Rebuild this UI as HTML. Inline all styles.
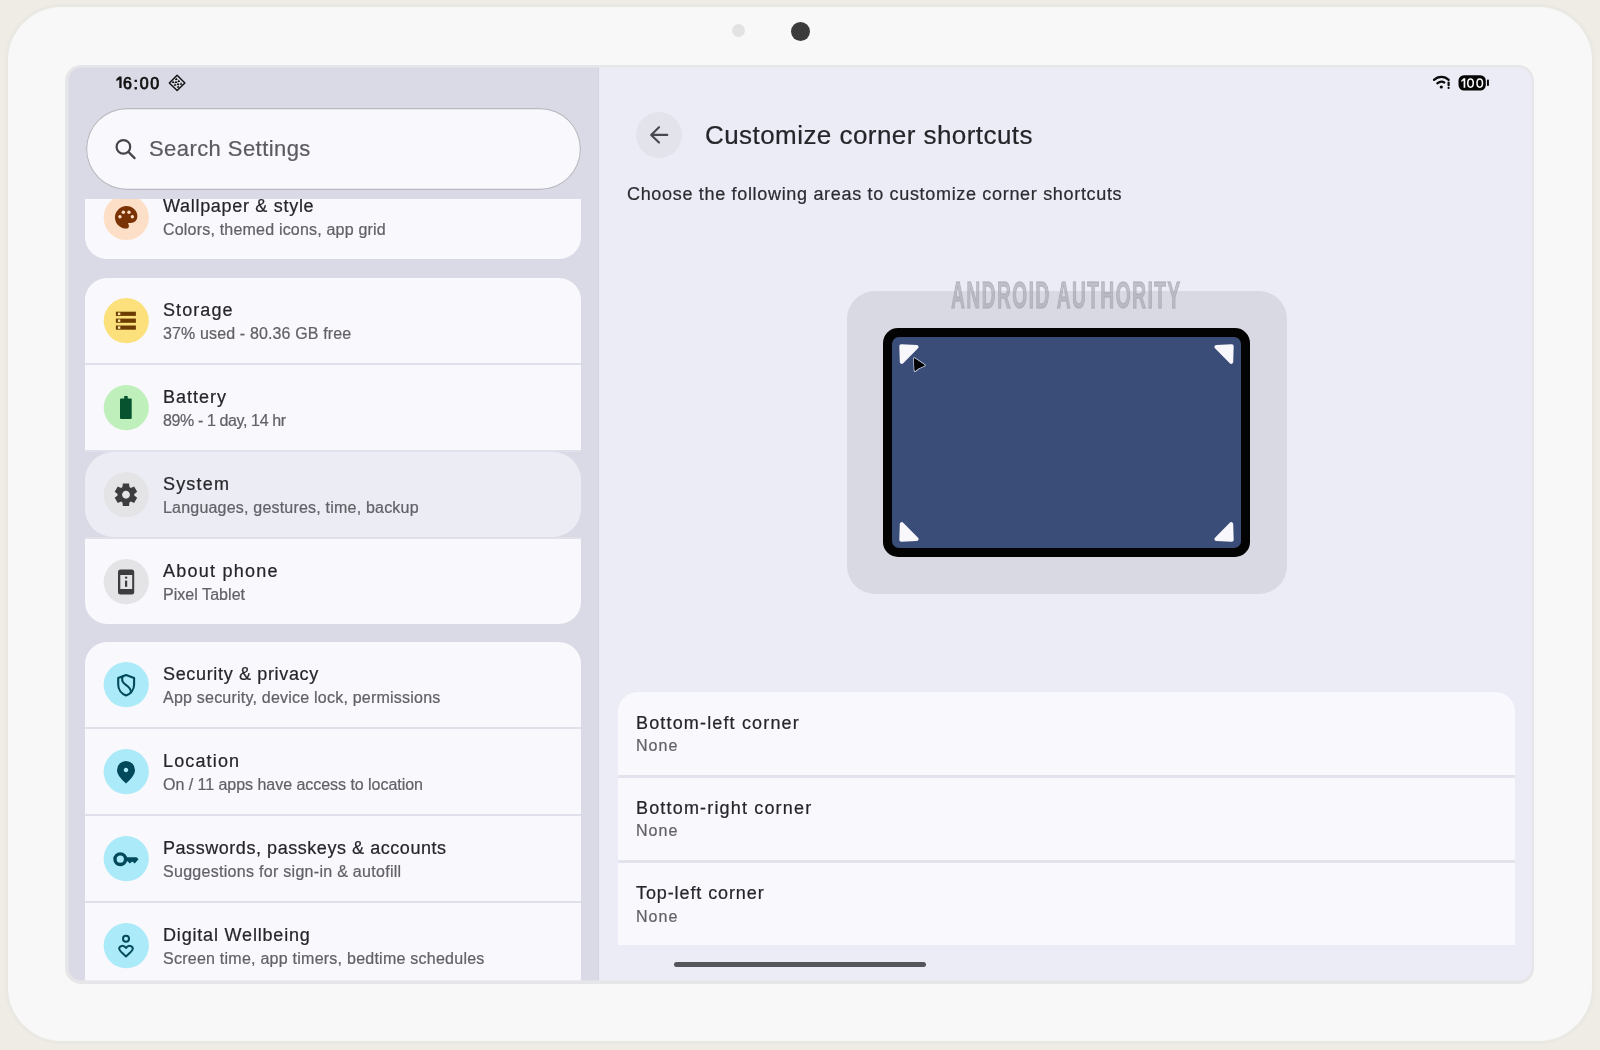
<!DOCTYPE html>
<html><head><meta charset="utf-8">
<style>
*{margin:0;padding:0;box-sizing:border-box}
html,body{width:1600px;height:1050px;overflow:hidden;background:#eeece5;font-family:"Liberation Sans",sans-serif}
.a{position:absolute}
.t{position:absolute;white-space:nowrap;line-height:1;will-change:transform}
#scr{position:absolute;left:0;top:0;width:1600px;height:1050px;clip-path:inset(67.5px 68.5px 69.5px 68.5px round 13px)}
svg{position:absolute;left:0;top:0}
</style></head>
<body>
<div class="a" style="left:4.6px;top:4.2px;width:1590.6000000000001px;height:1040.0px;background:#f8f8f8;border-radius:57px;border:3.5px solid #eae8e2;"></div>
<div class="a" style="left:731.5px;top:24px;width:13.0px;height:13px;background:#e3e3e3;border-radius:50%;"></div>
<div class="a" style="left:790.5px;top:21.5px;width:19.0px;height:19.0px;background:#3b3b3b;border-radius:50%;"></div>
<div class="a" style="left:65.2px;top:64.5px;width:1469.0px;height:919.1px;background:#e6e6e9;border-radius:16px;"></div>
<div id="scr">
<div class="a" style="left:60px;top:60px;width:1480px;height:930px;background:#ececf6;border-radius:0;"></div>
<div class="a" style="left:60px;top:60px;width:539px;height:930px;background:#dadae6;border-radius:0;"></div>
<div class="a" style="left:597.6px;top:60px;width:1.3999999999999773px;height:930px;background:#d3d3de;border-radius:0;"></div>
<div class="t" style="left:123.00px;top:75.66px;font-size:16px;color:#111;letter-spacing:1.700px;font-weight:normal;-webkit-text-stroke:0.75px #111;">6:00</div>
<div class="a" style="left:85.5px;top:108px;width:495.0px;height:81.5px;background:#f9f8fc;border-radius:41px;box-shadow:inset 0 0 0 1.2px #b9b9c2;"></div>
<div class="t" style="left:149.00px;top:138.18px;font-size:22px;color:#5b5b62;letter-spacing:0.430px;font-weight:normal;-webkit-text-stroke:0.22px #5b5b62;">Search Settings</div>
<div class="a" style="left:85px;top:363px;width:496px;height:2px;background:#e0e0ea;border-radius:0;"></div>
<div class="a" style="left:85px;top:450px;width:496px;height:2px;background:#e0e0ea;border-radius:0;"></div>
<div class="a" style="left:85px;top:537px;width:496px;height:2px;background:#e0e0ea;border-radius:0;"></div>
<div class="a" style="left:85px;top:727px;width:496px;height:2px;background:#e0e0ea;border-radius:0;"></div>
<div class="a" style="left:85px;top:814px;width:496px;height:2px;background:#e0e0ea;border-radius:0;"></div>
<div class="a" style="left:85px;top:901px;width:496px;height:2px;background:#e0e0ea;border-radius:0;"></div>
<div class="a" style="left:85px;top:199px;width:496px;height:60px;overflow:hidden;border-radius:0 0 22px 22px;background:#f9f8fc"><div style="position:absolute;left:-85px;top:-199px;width:1600px;height:1050px"><div class="t" style="left:162.50px;top:196.56px;font-size:18px;color:#25252a;letter-spacing:0.700px;font-weight:normal;-webkit-text-stroke:0.22px #25252a;">Wallpaper &amp; style</div>
<div class="t" style="left:162.50px;top:222.26px;font-size:16px;color:#616168;letter-spacing:0.197px;font-weight:normal;-webkit-text-stroke:0.22px #616168;">Colors, themed icons, app grid</div>
</div></div>
<div class="a" style="left:85px;top:278px;width:496px;height:85px;background:#f9f8fc;border-radius:22px 22px 0 0;"></div>
<div class="t" style="left:162.50px;top:300.56px;font-size:18px;color:#25252a;letter-spacing:1.083px;font-weight:normal;-webkit-text-stroke:0.22px #25252a;">Storage</div>
<div class="t" style="left:162.50px;top:326.26px;font-size:16px;color:#616168;letter-spacing:0.139px;font-weight:normal;-webkit-text-stroke:0.22px #616168;">37% used - 80.36 GB free</div>
<div class="a" style="left:85px;top:365px;width:496px;height:85px;background:#f9f8fc;border-radius:0;"></div>
<div class="t" style="left:162.50px;top:387.56px;font-size:18px;color:#25252a;letter-spacing:0.983px;font-weight:normal;-webkit-text-stroke:0.22px #25252a;">Battery</div>
<div class="t" style="left:162.50px;top:413.26px;font-size:16px;color:#616168;letter-spacing:-0.382px;font-weight:normal;-webkit-text-stroke:0.22px #616168;">89% - 1 day, 14 hr</div>
<div class="a" style="left:85px;top:452px;width:496px;height:85px;background:#ececf4;border-radius:28px;"></div>
<div class="t" style="left:162.50px;top:474.56px;font-size:18px;color:#25252a;letter-spacing:1.180px;font-weight:normal;-webkit-text-stroke:0.22px #25252a;">System</div>
<div class="t" style="left:162.50px;top:500.26px;font-size:16px;color:#616168;letter-spacing:0.203px;font-weight:normal;-webkit-text-stroke:0.22px #616168;">Languages, gestures, time, backup</div>
<div class="a" style="left:85px;top:539px;width:496px;height:85px;background:#f9f8fc;border-radius:0 0 22px 22px;"></div>
<div class="t" style="left:162.50px;top:561.56px;font-size:18px;color:#25252a;letter-spacing:1.240px;font-weight:normal;-webkit-text-stroke:0.22px #25252a;">About phone</div>
<div class="t" style="left:162.50px;top:587.26px;font-size:16px;color:#616168;letter-spacing:0.045px;font-weight:normal;-webkit-text-stroke:0.22px #616168;">Pixel Tablet</div>
<div class="a" style="left:85px;top:642px;width:496px;height:85px;background:#f9f8fc;border-radius:22px 22px 0 0;"></div>
<div class="t" style="left:162.50px;top:664.56px;font-size:18px;color:#25252a;letter-spacing:0.660px;font-weight:normal;-webkit-text-stroke:0.22px #25252a;">Security &amp; privacy</div>
<div class="t" style="left:162.50px;top:690.26px;font-size:16px;color:#616168;letter-spacing:0.220px;font-weight:normal;-webkit-text-stroke:0.22px #616168;">App security, device lock, permissions</div>
<div class="a" style="left:85px;top:729px;width:496px;height:85px;background:#f9f8fc;border-radius:0;"></div>
<div class="t" style="left:162.50px;top:751.56px;font-size:18px;color:#25252a;letter-spacing:1.143px;font-weight:normal;-webkit-text-stroke:0.22px #25252a;">Location</div>
<div class="t" style="left:162.50px;top:777.26px;font-size:16px;color:#616168;letter-spacing:-0.034px;font-weight:normal;-webkit-text-stroke:0.22px #616168;">On / 11 apps have access to location</div>
<div class="a" style="left:85px;top:816px;width:496px;height:85px;background:#f9f8fc;border-radius:0;"></div>
<div class="t" style="left:162.50px;top:838.56px;font-size:18px;color:#25252a;letter-spacing:0.550px;font-weight:normal;-webkit-text-stroke:0.22px #25252a;">Passwords, passkeys &amp; accounts</div>
<div class="t" style="left:162.50px;top:864.26px;font-size:16px;color:#616168;letter-spacing:0.290px;font-weight:normal;-webkit-text-stroke:0.22px #616168;">Suggestions for sign-in &amp; autofill</div>
<div class="a" style="left:85px;top:903px;width:496px;height:85px;background:#f9f8fc;border-radius:0;"></div>
<div class="t" style="left:162.50px;top:925.56px;font-size:18px;color:#25252a;letter-spacing:0.819px;font-weight:normal;-webkit-text-stroke:0.22px #25252a;">Digital Wellbeing</div>
<div class="t" style="left:162.50px;top:951.26px;font-size:16px;color:#616168;letter-spacing:0.246px;font-weight:normal;-webkit-text-stroke:0.22px #616168;">Screen time, app timers, bedtime schedules</div>
<div class="a" style="left:635.7px;top:111.7px;width:46.0px;height:45.999999999999986px;background:#e3e3eb;border-radius:50%;"></div>
<div class="t" style="left:705.00px;top:121.99px;font-size:26px;color:#25252a;letter-spacing:0.440px;font-weight:normal;-webkit-text-stroke:0.22px #25252a;">Customize corner shortcuts</div>
<div class="t" style="left:626.80px;top:184.56px;font-size:18px;color:#2b2b31;letter-spacing:0.680px;font-weight:normal;-webkit-text-stroke:0.22px #2b2b31;">Choose the following areas to customize corner shortcuts</div>
<div class="a" style="left:847px;top:291px;width:440px;height:303px;background:#d9d9e3;border-radius:28px;"></div>
<div class="t" style="left:951.00px;top:276.98px;font-size:37px;color:rgba(165,165,175,0.62);letter-spacing:2.700px;font-weight:bold;transform-origin:0 0;transform:scaleX(0.52);-webkit-text-stroke:1.3px rgba(165,165,175,0.62);">ANDROID AUTHORITY</div>
<div class="a" style="left:883px;top:328px;width:367px;height:229px;background:#030303;border-radius:15px;"></div>
<div class="a" style="left:892px;top:337px;width:349px;height:211px;background:#3a4c78;border-radius:7px;"></div>
<div class="a" style="left:618px;top:774.5px;width:897px;height:3.5px;background:#e3e3ed;border-radius:0;"></div>
<div class="a" style="left:618px;top:859.5px;width:897px;height:3.5px;background:#e3e3ed;border-radius:0;"></div>
<div class="a" style="left:618px;top:691.5px;width:897px;height:83.5px;background:#f9f8fc;border-radius:20px 20px 0 0;"></div>
<div class="t" style="left:636.00px;top:713.66px;font-size:18px;color:#25252a;letter-spacing:1.159px;font-weight:normal;-webkit-text-stroke:0.22px #25252a;">Bottom-left corner</div>
<div class="t" style="left:636.00px;top:737.96px;font-size:16px;color:#616168;letter-spacing:1.033px;font-weight:normal;-webkit-text-stroke:0.22px #616168;">None</div>
<div class="a" style="left:618px;top:777.5px;width:897px;height:82.5px;background:#f9f8fc;border-radius:0;"></div>
<div class="t" style="left:636.00px;top:799.16px;font-size:18px;color:#25252a;letter-spacing:1.172px;font-weight:normal;-webkit-text-stroke:0.22px #25252a;">Bottom-right corner</div>
<div class="t" style="left:636.00px;top:823.26px;font-size:16px;color:#616168;letter-spacing:1.033px;font-weight:normal;-webkit-text-stroke:0.22px #616168;">None</div>
<div class="a" style="left:618px;top:862.5px;width:897px;height:82.5px;background:#f9f8fc;border-radius:0;"></div>
<div class="t" style="left:636.00px;top:884.36px;font-size:18px;color:#25252a;letter-spacing:0.900px;font-weight:normal;-webkit-text-stroke:0.22px #25252a;">Top-left corner</div>
<div class="t" style="left:636.00px;top:908.66px;font-size:16px;color:#616168;letter-spacing:1.033px;font-weight:normal;-webkit-text-stroke:0.22px #616168;">None</div>
<div class="a" style="left:674px;top:962px;width:252px;height:4.5px;background:#55565c;border-radius:3px;"></div>
</div>
<svg width="1600" height="1050" viewBox="0 0 1600 1050">
<defs><clipPath id="cw"><rect x="60" y="199" width="540" height="80"/></clipPath></defs>
<g clip-path="url(#cw)">
<circle cx="126.25" cy="217.5" r="22.6" fill="#fddfc7"/>
<path transform="translate(112.65 203.85) scale(1.125)" fill="#7a3304" d="M12 22q-2.05 0-3.875-.788-1.825-.787-3.187-2.15-1.363-1.362-2.15-3.187Q2 14.05 2 12q0-2.075.813-3.9.812-1.825 2.2-3.175Q6.4 3.575 8.25 2.787 10.1 2 12.2 2q2 0 3.775.688 1.775.687 3.113 1.9Q20.425 5.8 21.212 7.450 22 9.1 22 11.05q0 2.875-1.75 4.413Q18.5 17 16 17h-1.85q-.225 0-.313.125-.087.125-.087.275 0 .3.375.863.375.562.375 1.287 0 1.25-.688 1.85Q13.125 22 12 22Z"/>
<g fill="#fddfc7" transform="translate(112.65 203.85) scale(1.125)">
<circle cx="6.5" cy="11.5" r="1.5"/><circle cx="9.5" cy="7.5" r="1.5"/><circle cx="14.5" cy="7.5" r="1.5"/><circle cx="17.5" cy="11.5" r="1.5"/>
</g>
</g>
<!-- storage -->
<circle cx="126.25" cy="320.7" r="22.6" fill="#fbe07c"/>
<g fill="#6b3d02">
<rect x="115.9" y="311.7" width="20" height="4.2"/>
<rect x="115.9" y="318.6" width="20" height="4.2"/>
<rect x="115.9" y="325.5" width="20" height="4.2"/>
</g>
<g fill="#fde9a6">
<rect x="117.9" y="312.6" width="2.4" height="2.4"/>
<rect x="117.9" y="319.5" width="2.4" height="2.4"/>
<rect x="117.9" y="326.4" width="2.4" height="2.4"/>
</g>
<!-- battery -->
<circle cx="126.25" cy="407.7" r="22.6" fill="#bff0bb"/>
<rect x="120" y="398.5" width="11.7" height="20.6" rx="1" fill="#08532f"/>
<rect x="124.2" y="396" width="3.5" height="3" fill="#08532f"/>
<!-- system -->
<circle cx="126.25" cy="494.7" r="22.6" fill="#e4e4e7"/>
<path transform="translate(112.5 481.3) scale(1.12)" fill="#3d3d40" fill-rule="evenodd" d="m9.25 22-.4-3.2q-.325-.125-.612-.3-.288-.175-.563-.375L4.7 19.375l-2.75-4.750 2.575-1.950Q4.5 12.5 4.5 12.337v-.675q0-.162.025-.337L1.95 9.375l2.75-4.750 2.975 1.250q.275-.2.575-.375.3-.175.6-.3l.4-3.2h5.5l.4 3.2q.325.125.613.3.287.175.562.375l2.975-1.250 2.750 4.750-2.575 1.950q.025.175.025.337v.675q0 .163-.05.338l2.575 1.950-2.750 4.750-2.950-1.250q-.275.2-.575.375-.3.175-.6.3l-.4 3.2Zm2.8-6.5q1.45 0 2.475-1.025Q15.55 13.45 15.55 12q0-1.45-1.025-2.475Q13.5 8.5 12.05 8.5q-1.475 0-2.488 1.025Q8.55 10.55 8.55 12q0 1.45 1.012 2.475Q10.575 15.5 12.05 15.5Z"/>
<!-- about -->
<circle cx="126.25" cy="581.7" r="22.6" fill="#e4e4e7"/>
<rect x="118" y="569.4" width="16.2" height="25" rx="2.5" fill="#3d3d40"/>
<rect x="120.3" y="575" width="11.9" height="14" fill="#e4e4e7"/>
<circle cx="126.1" cy="577.6" r="1.2" fill="#3d3d40"/>
<rect x="125" y="580.6" width="2.2" height="6.2" fill="#3d3d40"/>
<!-- security -->
<circle cx="126.25" cy="684.7" r="22.6" fill="#abeaf8"/>
<g fill="none" stroke="#024a5b" stroke-width="2.1" stroke-linejoin="round" stroke-linecap="round">
<path d="M126.1 675 L118.2 678 V684.5 C118.2 689.8 121.6 693.9 126.1 695.4 C130.6 693.9 134.1 689.8 134.1 684.5 V678 Z"/>
<path d="M122.8 676.2 C121.2 679.5 122.2 682.3 125.5 684.6 C129.3 687.2 131.4 689.3 130.9 692.6"/>
</g>
<!-- location -->
<circle cx="126.25" cy="771.7" r="22.6" fill="#abeaf8"/>
<path transform="translate(112.44 758.7) scale(1.13)" fill="#024a5b" d="M12 12q.825 0 1.413-.588Q14 10.825 14 10t-.587-1.413Q12.825 8 12 8q-.825 0-1.412.587Q10 9.175 10 10q0 .825.588 1.412Q11.175 12 12 12Zm0 10q-4.025-3.425-6.012-6.363Q4 12.7 4 10.2q0-3.75 2.413-5.975Q8.825 2 12 2t5.587 2.225Q20 6.45 20 10.2q0 2.5-1.987 5.437Q16.025 18.575 12 22Z"/>
<!-- key -->
<circle cx="126.25" cy="858.7" r="22.6" fill="#abeaf8"/>
<circle cx="120.3" cy="859.2" r="5.3" fill="none" stroke="#024a5b" stroke-width="3.4"/>
<path fill="#024a5b" d="M124.5 857.3 H136.6 L138.5 859.2 L134.7 863.4 L132.3 861.4 L129.8 863.4 L127.6 861.2 H124.5 Z"/>
<!-- wellbeing -->
<circle cx="126.25" cy="945.7" r="22.6" fill="#abeaf8"/>
<g fill="none" stroke="#024a5b" stroke-width="2" stroke-linejoin="round">
<circle cx="126" cy="938.8" r="3"/>
<path d="M126 948 C124 944.8 119.2 945.3 119.2 948.8 C119.2 950.6 120.6 951.8 126 956.4 C131.4 951.8 132.8 950.6 132.8 948.8 C132.8 945.3 128 944.8 126 948 Z"/>
</g>
<!-- search icon -->
<g fill="none" stroke="#45454b" stroke-width="2.2" stroke-linecap="round">
<circle cx="123.4" cy="146.9" r="6.8"/>
<path d="M128.4 151.9 L134.6 158.1"/>
</g>
<!-- back arrow -->
<path d="M667.3 134.9 H651.2 M659 127.2 L651.2 134.9 L659 142.6" fill="none" stroke="#48484f" stroke-width="2.1" stroke-linecap="round" stroke-linejoin="round"/>
<!-- clock 1 -->
<path d="M119.2 76.6 H121.6 V88 H119.3 V79.6 L116.4 81.3 V79 Z" fill="#111"/>
<!-- status diamond -->
<path d="M177.1 75.2 L184.9 82.9 L177.1 90.6 L169.3 82.9 Z" fill="none" stroke="#111" stroke-width="1.4" stroke-linejoin="round"/>
<g fill="#111"><path d="M174.9 80.0 L177.7 80.0 L176.3 77.5 Z"/><path d="M171.7 83.0 L174.5 83.0 L173.1 80.5 Z"/><path d="M174.6 83.0 L177.4 83.0 L176.0 80.5 Z"/><path d="M177.4 82.1 L180.2 82.1 L178.8 79.6 Z"/><path d="M173.6 85.7 L176.4 85.7 L175.0 83.2 Z"/><path d="M176.6 85.1 L179.4 85.1 L178.0 82.6 Z"/><path d="M179.7 84.8 L182.5 84.8 L181.1 82.3 Z"/><path d="M176.8 87.8 L179.6 87.8 L178.2 85.3 Z"/></g>
<!-- wifi -->
<g fill="none" stroke="#0a0a0a" stroke-width="2.2" stroke-linecap="round">
<path d="M1434 79.9 A10.4 10.4 0 0 1 1448.7 79.9"/>
<path d="M1437.3 83.4 Q1440.9 80.3 1444.3 82.5"/>
<path d="M1448.6 82.5 V85.2"/>
</g>
<circle cx="1441.3" cy="87" r="1.6" fill="#0a0a0a"/>
<circle cx="1448.6" cy="87.9" r="1.1" fill="#0a0a0a"/>
<!-- battery -->
<rect x="1458.5" y="75.2" width="27.3" height="15.3" rx="5.5" fill="#050505"/>
<rect x="1487" y="79.6" width="1.9" height="6.5" rx="0.8" fill="#050505"/>
<path d="M1463.6 78.2 H1465.3 V87.8 H1463.6 V80.6 L1461.3 82 V80.4 Z" fill="#fff"/>
<g fill="none" stroke="#fff" stroke-width="1.55">
<ellipse cx="1470.5" cy="83.05" rx="2.75" ry="4.15"/>
<ellipse cx="1479.75" cy="83.05" rx="2.75" ry="4.15"/>
</g>
<!-- illustration triangles -->
<g fill="#f8f7fb" stroke="#f8f7fb" stroke-width="4" stroke-linejoin="round">
<path d="M901.3 346.3 L916.6 346.9 L901.8 361.9 Z"/>
<path d="M1231.7 346.3 L1216.4 346.9 L1231.2 361.9 Z"/>
<path d="M901.3 539.7 L916.6 539.1 L901.8 524.1 Z"/>
<path d="M1231.7 539.7 L1216.4 539.1 L1231.2 524.1 Z"/>
</g>
<!-- cursor -->
<path d="M914.4 358.6 L924.4 365.3 L918.6 367.9 L915 370.6 Z" fill="#000" stroke="#c3cbdb" stroke-width="2.6" stroke-linejoin="round" paint-order="stroke"/>
<path d="M914.4 358.6 L924.4 365.3 L918.6 367.9 L915 370.6 Z" fill="#000" stroke="#000" stroke-width="1" stroke-linejoin="round"/>
</svg>
</body></html>
